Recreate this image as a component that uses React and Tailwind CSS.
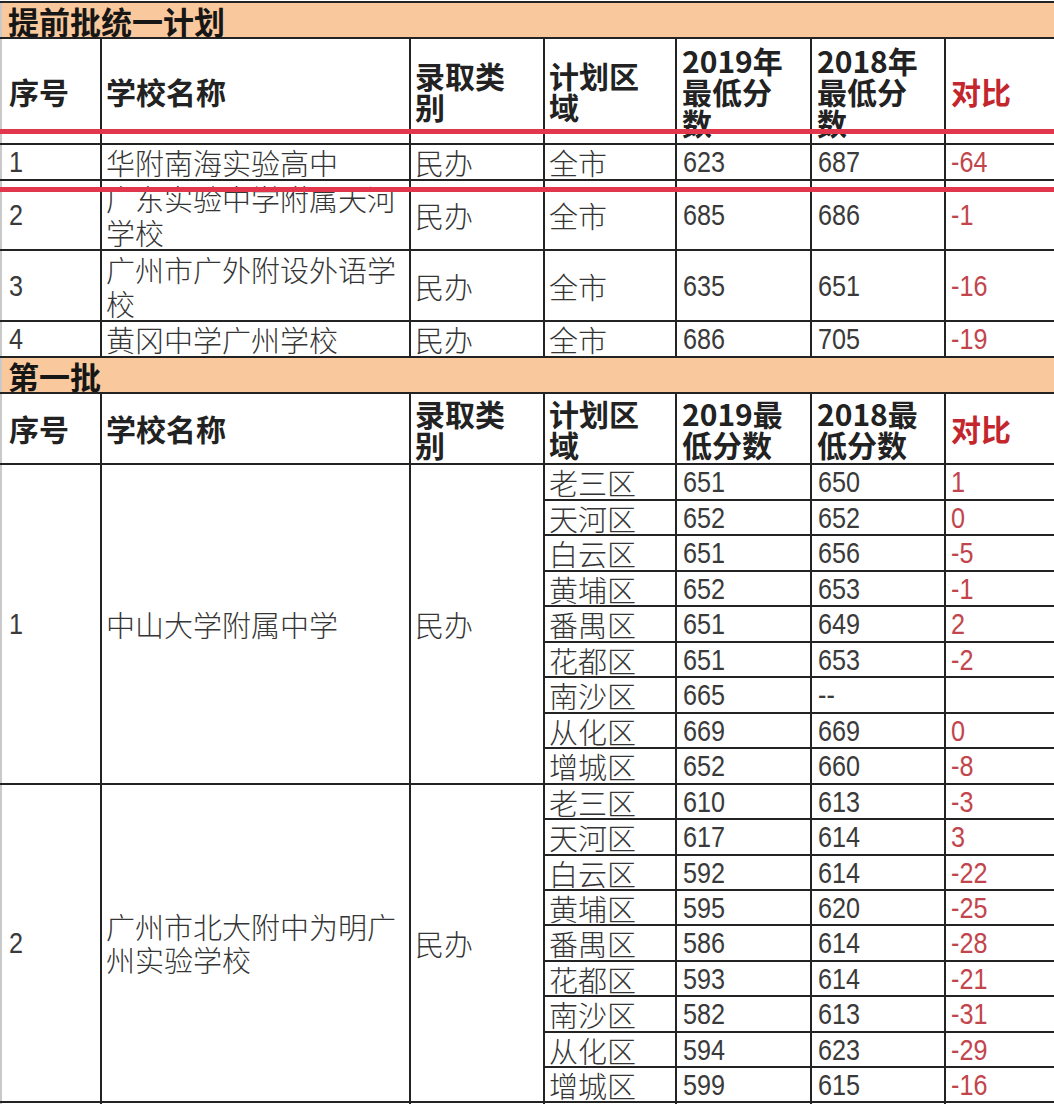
import React from 'react';

const cjk = "font-['Noto_Sans_CJK_SC',sans-serif]";
const num = "font-['Liberation_Sans','Noto_Sans_CJK_SC',sans-serif]";
const line = 'border-2 border-[#232323]';
const td = `${line} p-0 align-middle overflow-hidden`;

const early = [
  { no: '1', name: '华附南海实验高中', y19: '623', y18: '687', diff: '-64', h: 'h-[36px]' },
  { no: '2', name: '广东实验中学附属天河学校', y19: '685', y18: '686', diff: '-1', h: 'h-[70px]' },
  { no: '3', name: '广州市广外附设外语学校', y19: '635', y18: '651', diff: '-16', h: 'h-[71px]' },
  { no: '4', name: '黄冈中学广州学校', y19: '686', y18: '705', diff: '-19', h: 'h-[35px]' },
];

const firstBatch = [
  {
    no: '1',
    name: '中山大学附属中学',
    rows: [
      ['老三区', '651', '650', '1', 'h-[36px]'],
      ['天河区', '652', '652', '0', 'h-[35px]'],
      ['白云区', '651', '656', '-5', 'h-[36px]'],
      ['黄埔区', '652', '653', '-1', 'h-[35px]'],
      ['番禺区', '651', '649', '2', 'h-[36px]'],
      ['花都区', '651', '653', '-2', 'h-[35px]'],
      ['南沙区', '665', '--', '', 'h-[36px]'],
      ['从化区', '669', '669', '0', 'h-[35px]'],
      ['增城区', '652', '660', '-8', 'h-[36px]'],
    ],
  },
  {
    no: '2',
    name: '广州市北大附中为明广州实验学校',
    rows: [
      ['老三区', '610', '613', '-3', 'h-[35px]'],
      ['天河区', '617', '614', '3', 'h-[36px]'],
      ['白云区', '592', '614', '-22', 'h-[35px]'],
      ['黄埔区', '595', '620', '-25', 'h-[35px]'],
      ['番禺区', '586', '614', '-28', 'h-[36px]'],
      ['花都区', '593', '614', '-21', 'h-[35px]'],
      ['南沙区', '582', '613', '-31', 'h-[36px]'],
      ['从化区', '594', '623', '-29', 'h-[35px]'],
      ['增城区', '599', '615', '-16', 'h-[35px]'],
    ],
  },
];

function Band({ title }) {
  return (
    <tr className="h-[36px]">
      <td
        colSpan={7}
        className={`${line} border-l-[#c9c9c9] bg-[#f9c99d] p-0 pl-[6px] align-bottom text-[31px] leading-[33px] font-bold text-[#161616] whitespace-nowrap ${cjk}`}
      >
        {title}
      </td>
    </tr>
  );
}

function Header({ h, y19, y18 }) {
  const hd = `${td} text-[30px] leading-[31px] font-bold text-[#222] whitespace-nowrap`;
  return (
    <tr className={h}>
      <td className={`${hd} border-l-[#c9c9c9] pl-[7px] ${cjk}`}>序号</td>
      <td className={`${hd} pl-[4px] ${cjk}`}>学校名称</td>
      <td className={`${hd} pl-[4px] ${cjk}`}>录取类<br />别</td>
      <td className={`${hd} pl-[4px] ${cjk}`}>计划区<br />域</td>
      <td className={`${hd} pl-[5px] ${cjk}`}>{y19}</td>
      <td className={`${hd} pl-[5px] ${cjk}`}>{y18}</td>
      <td className={`${hd} pl-[5px] text-[#c4262d] ${cjk}`}>对比</td>
    </tr>
  );
}

const body = `${td} text-[29px] leading-[32px] font-light text-[#353535] ${cjk}`;
const digits = `${td} text-[30px] leading-[32px] text-[#3a3a3a] whitespace-nowrap ${num}`;
const diffCls = `${td} pl-[5px] text-[30px] leading-[32px] text-[#c2454d] whitespace-nowrap ${num}`;

function Num({ children }) {
  return <span className="inline-block origin-left scale-x-[0.84]">{children}</span>;
}

export default function App() {
  return (
    <div className="relative h-[1104px] w-[1054px] overflow-hidden bg-white">
      <table className="mt-[1px] w-[1062px] table-fixed border-collapse">
        <colgroup>
          <col className="w-[100px]" />
          <col className="w-[309px]" />
          <col className="w-[134px]" />
          <col className="w-[132px]" />
          <col className="w-[135px]" />
          <col className="w-[134px]" />
          <col className="w-[118px]" />
        </colgroup>
        <tbody>
          <Band title="提前批统一计划" />
          <Header
            h="h-[106px]"
            y19={<>2019年<br />最低分<br />数</>}
            y18={<>2018年<br />最低分<br />数</>}
          />
          {early.map((r) => (
            <tr key={r.no} className={r.h}>
              <td className={`${digits} border-l-[#c9c9c9] pl-[7px]`}><Num>{r.no}</Num></td>
              <td className={`${body} break-all pl-[4px] pr-[2px] leading-[34px]`}>{r.name}</td>
              <td className={`${body} whitespace-nowrap pl-[4px]`}>民办</td>
              <td className={`${body} whitespace-nowrap pl-[4px]`}>全市</td>
              <td className={`${digits} pl-[6px]`}><Num>{r.y19}</Num></td>
              <td className={`${digits} pl-[6px]`}><Num>{r.y18}</Num></td>
              <td className={diffCls}><Num>{r.diff}</Num></td>
            </tr>
          ))}
          <Band title="第一批" />
          <Header
            h="h-[71px]"
            y19={<>2019最<br />低分数</>}
            y18={<>2018最<br />低分数</>}
          />
          {firstBatch.map((s) =>
            s.rows.map((r, i) => (
              <tr key={s.no + r[0]} className={r[4]}>
                {i === 0 && (
                  <>
                    <td rowSpan={s.rows.length} className={`${digits} border-l-[#c9c9c9] pl-[7px]`}>
                      <Num>{s.no}</Num>
                    </td>
                    <td
                      rowSpan={s.rows.length}
                      className={`${body} break-all pl-[4px] pr-[2px] leading-[33px]`}
                    >
                      {s.name}
                    </td>
                    <td rowSpan={s.rows.length} className={`${body} whitespace-nowrap pl-[4px]`}>
                      民办
                    </td>
                  </>
                )}
                <td className={`${body} whitespace-nowrap pl-[4px]`}>{r[0]}</td>
                <td className={`${digits} pl-[6px]`}><Num>{r[1]}</Num></td>
                <td className={`${digits} pl-[6px]`}><Num>{r[2]}</Num></td>
                <td className={diffCls}><Num>{r[3]}</Num></td>
              </tr>
            ))
          )}
          <tr className="h-[40px]">
            <td className={`${td} border-l-[#c9c9c9]`} />
            <td className={td} />
            <td className={td} />
            <td className={td} />
            <td className={td} />
            <td className={td} />
            <td className={td} />
          </tr>
        </tbody>
      </table>
      <div className="absolute left-0 top-[129px] h-[5px] w-full bg-[#e2364d]" />
      <div className="absolute left-0 top-[187px] h-[5px] w-full bg-[#e2364d]" />
    </div>
  );
}
